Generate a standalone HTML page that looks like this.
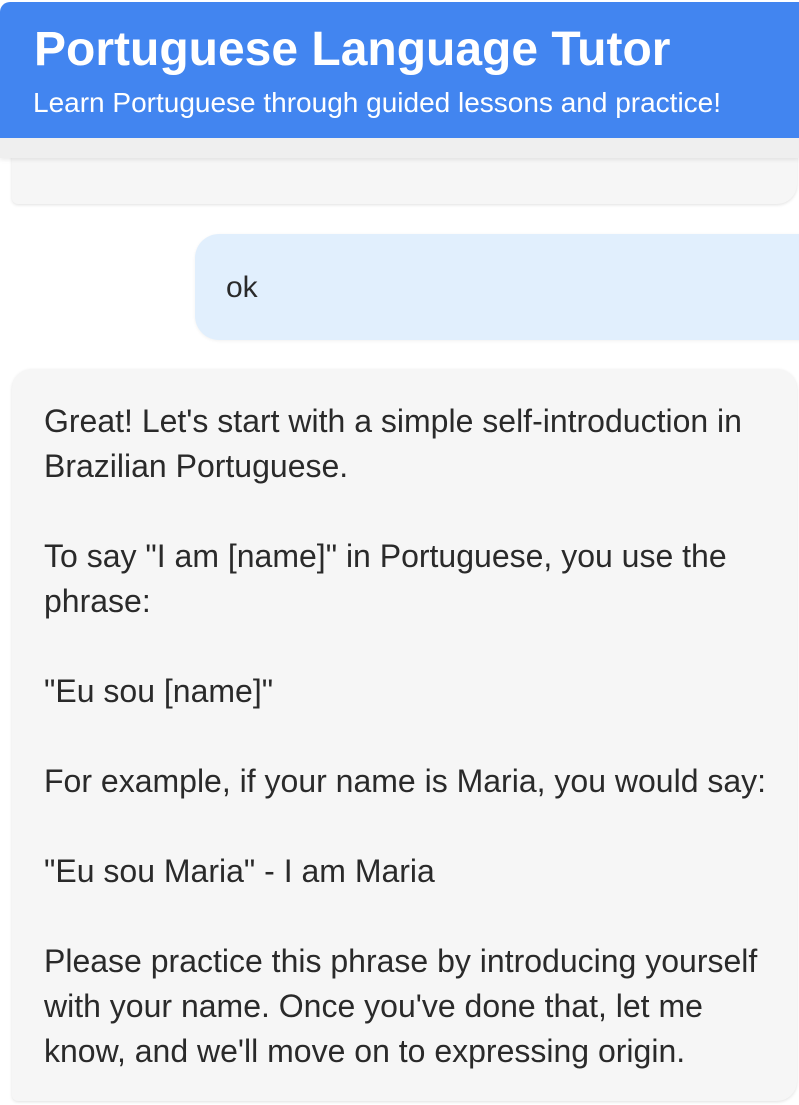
<!DOCTYPE html>
<html><head><meta charset="utf-8"><style>
html,body{margin:0;padding:0;background:#fff;width:799px;height:1105px;overflow:hidden;font-family:"Liberation Sans",Arial,sans-serif;}
.hdr{position:absolute;left:0;top:2px;width:799px;height:136px;background:#4285f0;border-top-left-radius:10px;color:#fff;z-index:3;}
.hdr h1{position:absolute;left:34px;top:20px;margin:0;font-size:48px;font-weight:bold;line-height:56px;white-space:nowrap;}
.hdr p{position:absolute;left:33px;top:84px;margin:0;font-size:28px;line-height:34px;white-space:nowrap;}
.strip{position:absolute;left:0;top:138px;width:799px;height:20px;background:#efefef;box-shadow:0 2px 4px rgba(0,0,0,.08);z-index:2;}
.b1{position:absolute;left:12px;top:100px;width:785px;height:104px;background:#f6f6f6;border-radius:6px 20px 20px 6px;box-shadow:0 1px 3px rgba(0,0,0,.12);}
.u{position:absolute;left:195px;top:234px;width:640px;height:106px;background:#e1effd;border-radius:24px;box-shadow:0 1px 3px rgba(0,0,0,.06);}
.u span{position:absolute;left:31px;top:34px;font-size:30px;line-height:40px;color:#2a2a2a;}
.b2{position:absolute;left:12px;top:369px;width:785px;height:732px;background:#f6f6f6;border-radius:20px 20px 20px 6px;box-shadow:0 1px 3px rgba(0,0,0,.12);}
.b2 div{position:absolute;left:32px;top:30px;font-size:32px;line-height:45px;color:#2a2a2a;white-space:nowrap;}
</style></head><body>
<div class="hdr"><h1>Portuguese Language Tutor</h1><p>Learn Portuguese through guided lessons and practice!</p></div>
<div class="strip"></div>
<div class="b1"></div>
<div class="u"><span>ok</span></div>
<div class="b2"><div>Great! Let's start with a simple self-introduction in<br>Brazilian Portuguese.<br><br>To say "I am [name]" in Portuguese, you use the<br>phrase:<br><br>"Eu sou [name]"<br><br>For example, if your name is Maria, you would say:<br><br>"Eu sou Maria" - I am Maria<br><br>Please practice this phrase by introducing yourself<br>with your name. Once you've done that, let me<br>know, and we'll move on to expressing origin.</div></div>
</body></html>
